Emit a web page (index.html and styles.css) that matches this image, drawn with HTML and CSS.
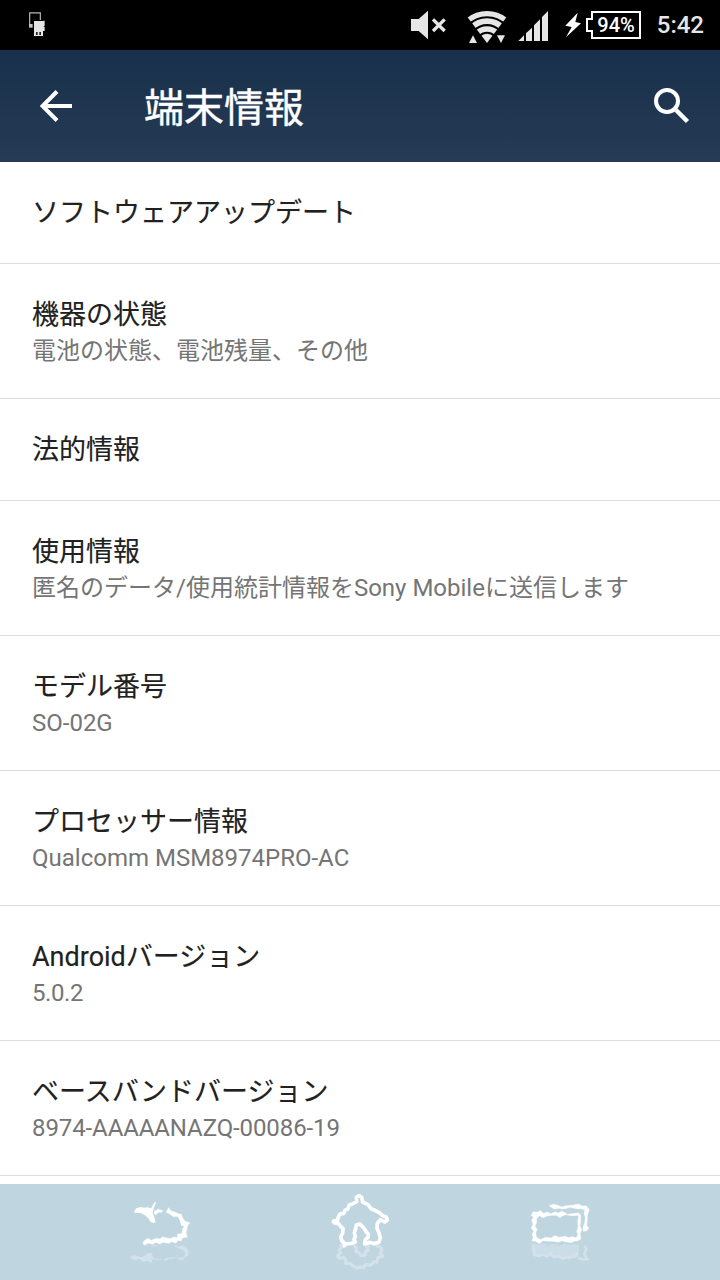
FILE: index.html
```html
<!DOCTYPE html>
<html lang="ja">
<head>
    <meta charset="UTF-8">
    <meta name="viewport" content="width=device-width, initial-scale=1.0">
    <title>端末情報</title>
    <link rel="stylesheet" href="styles.css">
</head>
<body>
    <div class="status-bar">
        <svg class="icon-usb" width="24" height="50" viewBox="84 0 72 150">
            <path d="M121 60V38.500H89V78" fill="none" stroke="#b8b8b8" stroke-width="3.500"/>
            <path d="M87 72h11v11h-11z" fill="#c4c4c4"/>
            <path d="M102 63h28v-1h4v17h-3v2h3v12h-5v15h-27z" fill="#e6e6e6"/>
            <path d="M108 96h5v9h-5zM118 96h5v9h-5z" fill="#222"/>
        </svg>
        <div class="status-icons">
            <svg width="38" height="50" viewBox="30 0 114 150">
                <path d="M33 57h23L84 32v86L56 93H33z" fill="#e6e6e6"/>
                <path d="M99 58l35 35M134 58L99 93" stroke="#e6e6e6" stroke-width="10"/>
            </svg>
            <svg class="icon-wifi" width="40" height="50" viewBox="201 0 120 150">
                <clipPath id="wifiFan">
                    <path d="M261 129L196 43V20H326V43z"/>
                </clipPath>
                <g clip-path="url(#wifiFan)" fill="none" stroke="#e6e6e6">
                    <circle cx="261" cy="129" r="88" stroke-width="16"/>
                    <circle cx="261" cy="129" r="65.500" stroke-width="17"/>
                    <circle cx="261" cy="129" r="42" stroke-width="17"/>
                    <circle cx="261" cy="129" r="14" stroke-width="28"/>
                </g>
                <path d="M219 106l12 23h-24zM291 106h24l-12 23z" fill="#e6e6e6"/>
            </svg>
            <svg class="icon-signal" width="31" height="50" viewBox="354 0 93 150">
                <path d="M355 123l17-17v17zM378 100l18-17v40h-18zM402 76l18-18v65h-18zM426 51l18-18v90h-18z" fill="#e6e6e6"/>
            </svg>
            <svg class="icon-bolt" width="16" height="50" viewBox="30 0 48 150">
                <path d="M68 38L31 77L50 81L33 112L78 70L61 66z" fill="#fff"/>
            </svg>
            <div class="battery">
                <svg width="55" height="28" viewBox="0 0 55 28">
                    <path d="M6 1h48v26H6v-7H1V8h5z" fill="none" stroke="#fff" stroke-width="2"/>
                </svg>
                <span class="battery-level">94%</span>
            </div>
            <span class="clock">5:42</span>
        </div>
    </div>

    <div class="action-bar">
        <svg width="32" height="32" viewBox="0 0 32 32">
            <path d="M17 1.500L2.500 16L17 30.500M3 16h29" fill="none" stroke="#fff" stroke-width="4"/>
        </svg>
        <h1 class="page-title">端末情報</h1>
        <svg class="icon-search" width="36" height="36" viewBox="0 0 36 36">
            <circle cx="13" cy="13" r="11" fill="none" stroke="#fff" stroke-width="4"/>
            <path d="M22 22l11.500 11.500" stroke="#fff" stroke-width="4.500"/>
        </svg>
    </div>

    <div class="settings-list">
        <div class="item single">
            <div class="item-title">ソフトウェアアップデート</div>
        </div>
        <div class="item">
            <div class="item-title">機器の状態</div>
            <div class="item-summary">電池の状態、電池残量、その他</div>
        </div>
        <div class="item single">
            <div class="item-title">法的情報</div>
        </div>
        <div class="item">
            <div class="item-title">使用情報</div>
            <div class="item-summary">匿名のデータ/使用統計情報をSony Mobileに送信します</div>
        </div>
        <div class="item">
            <div class="item-title">モデル番号</div>
            <div class="item-summary">SO-02G</div>
        </div>
        <div class="item">
            <div class="item-title">プロセッサー情報</div>
            <div class="item-summary">Qualcomm MSM8974PRO-AC</div>
        </div>
        <div class="item">
            <div class="item-title">Androidバージョン</div>
            <div class="item-summary version">5.0.2</div>
        </div>
        <div class="item">
            <div class="item-title">ベースバンドバージョン</div>
            <div class="item-summary baseband">8974-AAAAANAZQ-00086-19</div>
        </div>
    </div>

    <div class="nav-bar">
        <!-- back -->
        <svg width="110" height="96" viewBox="0 24 330 288">
            <path d="M98 207l12-2 11 5 14-4 13 6M196 208l10 4 10-4 12 4 8 13-1 13-9 6-8 8-13-2-6-7-11 5-12 1-8 6-12-5-14 2-13-4-5 13-12-6-11 3-13-9-13 4-14-8 5-7 14 1 14 5 10-5 10-8 12 1 3 13 18 4 13 2 13-6 18-2 15 2 16-2 4-14-9-8-11-4-12-5z" fill="#d2e1ea"/>
            <path d="M72 106L79 97L91 93L102 95L112 94L123 97L134 78L138 80L131 98L128 111L133 123L137 139L130 141L121 137L116 128L104 117L92 111L76 111z" fill="#fff"/>
            <path d="M134 105L145 100L158 104L155 109L145 109L137 116L132 112zM168 109L176 95L183 105L196 109L208 115L214 114L216 122L225 136L240 141L232 149L231 160L228 169L232 183L218 185L213 195L204 193L198 201L185 197L176 202L160 199L149 204L138 199L127 205L116 201L103 207L98 200L108 190L117 187L122 194L139 187L150 189L158 183L179 188L193 183L202 186L203 174L216 173L217 160L223 151L214 148L210 132L202 121L190 122L180 114z" fill="#fff" stroke="#fff" stroke-width="1.500"/>
        </svg>
        <!-- home -->
        <svg width="110" height="96" viewBox="0 24 330 288">
            <path d="M91 203L96 213L88 221L92 231L82 240L88 247L101 244L108 253L107 262L121 262L130 271L141 276L149 273L161 274L167 265L181 268L192 257L201 258L204 244L218 241L211 232L216 218L207 210L197 209M130 208L139 214L137 225L148 231L154 239L166 237L165 228L175 223L169 211L180 207" fill="none" stroke="#d2e1ea" stroke-width="10" stroke-linejoin="round"/>
            <path d="M103 210L106 204L125 202L136 198L132 190L136 182L133 170L137 158L139 147L149 144L157 151L163 158L168 167L175 174L174 184L166 191L164 204L179 199L192 203L207 198L211 186L207 171L201 157L202 143L211 131L224 138L232 132L229 123L218 119L208 110L195 103L184 99L174 86L158 78L155 64L147 59L139 64L140 77L127 84L118 86L114 98L104 104L102 112L90 114L85 123L83 133L70 135L72 140L86 143L92 151L99 157L98 172L92 182L96 195L104 202z" fill="none" stroke="#fff" stroke-width="11" stroke-linejoin="round"/>
        </svg>
        <!-- recent apps -->
        <svg width="110" height="96" viewBox="0 24 330 288">
            <path d="M66 199L77 205L91 206L101 202L113 210L132 203L149 209L163 203L181 207L193 203L207 208L207 218L205 244L188 244L179 252L169 247L158 252L142 245L129 247L119 239L107 244L96 238L83 242L70 239L63 219z" fill="#cbdde6"/>
            <path d="M69 205L73 222L72 236L86 240L98 235L112 241L122 233L131 243L146 240L157 247L178 243L196 242L203 230" fill="none" stroke="#d2e1ea" stroke-width="8"/>
            <path d="M224 209L229 220L223 233L231 249L217 250L205 246" fill="none" stroke="#d2e1ea" stroke-width="8"/>
            <path d="M118 89L130 85L143 88L155 93L169 89L188 88L205 84L216 90L230 90L238 102L232 117L232 133L230 147L236 156L230 164L220 166L219 154L224 141L226 124L222 112L225 102L213 98L199 98L180 94L165 98L156 99L147 97L132 99z" fill="#fff" stroke="#fff" stroke-width="1.500"/>
            <path d="M69 107L80 109L92 104L100 112L113 109L122 113L135 108L146 111L154 106L166 110L171 115L158 119L150 125L140 118L127 118L113 119L99 125L88 119L80 126L79 142L75 150L81 161L77 170L79 183L92 191L107 184L123 186L134 179L147 184L166 181L177 185L187 182L199 186L204 175L200 166L205 153L203 137L206 121L202 118L186 119L169 116L185 113L205 111L212 117L212 135L210 149L215 161L210 173L213 188L202 195L193 195L184 200L166 197L155 194L145 198L130 196L113 195L98 194L88 203L77 196L66 194L70 184L66 174L71 166L64 156L69 145L65 131L72 124L64 119z" fill="#fff" stroke="#fff" stroke-width="1.500"/>
        </svg>
    </div>
</body>
</html>
```
FILE: styles.css
```css
body {
    margin: 0;
    padding: 0;
    width: 720px;
    height: 1280px;
    overflow: hidden;
    display: flex;
    flex-direction: column;
    background: #fff;
    font-family: Roboto, "Noto Sans CJK JP", sans-serif;
}
svg {
    display: block;
    flex-shrink: 0;
}

.status-bar {
    height: 50px;
    box-sizing: border-box;
    padding: 0 16px 0 28px;
    display: flex;
    justify-content: space-between;
    background: #000;
    flex-shrink: 0;
}
.status-icons {
    display: flex;
    align-items: center;
}
.icon-wifi {
    margin-left: 19px;
}
.icon-signal {
    margin-left: 11px;
}
.icon-bolt {
    margin-left: 16px;
}
.battery {
    display: grid;
    margin-left: 5px;
}
.battery svg,
.battery-level {
    grid-area: 1 / 1;
}
.battery-level {
    padding-left: 5px;
    font-size: 20px;
    font-weight: 500;
    line-height: 28px;
    text-align: center;
    color: #fff;
}
.clock {
    width: 48px;
    margin-left: 15px;
    font-size: 24px;
    font-weight: 500;
    line-height: 54px;
    text-align: right;
    color: #e6e6e6;
}

.action-bar {
    height: 112px;
    box-sizing: border-box;
    padding: 0 30px 0 40px;
    display: flex;
    align-items: center;
    background: linear-gradient(#18304c, #263b55);
    flex-shrink: 0;
}
.page-title {
    margin: 0 0 0 72px;
    padding-top: 5px;
    font-size: 40px;
    font-weight: 400;
    line-height: 56px;
    color: #fff;
    -webkit-text-stroke: 0.4px #fff;
}
.icon-search {
    margin-left: auto;
}

.settings-list {
    flex: 1;
    overflow: hidden;
}
.item {
    height: 134px;
    border-bottom: 1px solid #dedede;
}
.item.single {
    height: 101px;
}
.item-title,
.item-summary {
    padding: 0 32px;
    line-height: 36px;
    white-space: nowrap;
}
.item-title {
    padding-top: 33px;
    font-size: 27px;
    color: #212121;
    -webkit-text-stroke: 0.15px #212121;
}
.item-summary {
    font-size: 24px;
    color: #757575;
}
.item-summary.version {
    letter-spacing: -0.4px;
}
.item-summary.baseband {
    letter-spacing: -0.1px;
}

.nav-bar {
    height: 96px;
    box-sizing: border-box;
    padding-left: 110px;
    display: flex;
    gap: 90px;
    background: #bfd5e0;
    flex-shrink: 0;
}
```
